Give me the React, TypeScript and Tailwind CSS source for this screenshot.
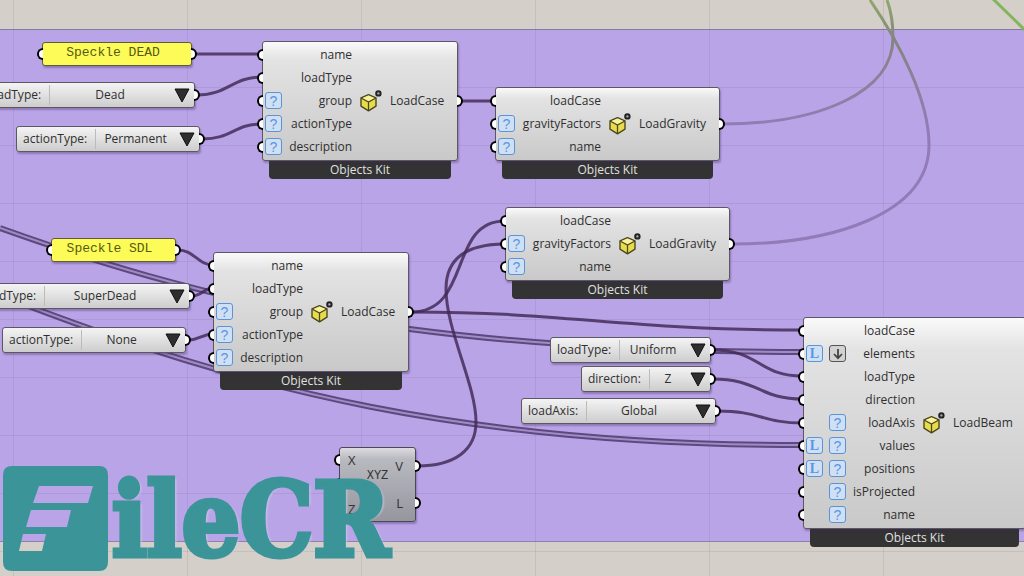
type Badge = 'optional' | 'list' | 'flatten'

type Param = {
  name: string
  badges?: (Badge | null)[]
}

const loadCaseInputs: Param[] = [
  { name: 'name' },
  { name: 'loadType' },
  { name: 'group', badges: ['optional'] },
  { name: 'actionType', badges: ['optional'] },
  { name: 'description', badges: ['optional'] },
]

const loadGravityInputs: Param[] = [
  { name: 'loadCase' },
  { name: 'gravityFactors', badges: ['optional'] },
  { name: 'name', badges: ['optional'] },
]

const loadBeamInputs: Param[] = [
  { name: 'loadCase' },
  { name: 'elements', badges: ['list', 'flatten'] },
  { name: 'loadType' },
  { name: 'direction' },
  { name: 'loadAxis', badges: [null, 'optional'] },
  { name: 'values', badges: ['list', 'optional'] },
  { name: 'positions', badges: ['list', 'optional'] },
  { name: 'isProjected', badges: [null, 'optional'] },
  { name: 'name', badges: [null, 'optional'] },
]

const wires = [
  'M194 54H262',
  'M197 95C228 95 232 77 262 77',
  'M202 139C232 139 234 124 262 124',
  'M460 101H496',
  'M178 250C194 250 198 265 213 265',
  'M192 296C202 296 204 288 213 288',
  'M188 340C200 340 202 334 213 334',
  'M411 312C472 312 448 221 505 221',
  'M417 466C455 466 476 450 476 422C476 385 446 330 446 289C446 260 465 244 505 244',
  'M411 312C570 312 620 330 803 330',
  'M712 350C760 350 758 376 803 376',
  'M712 379C760 379 758 399 803 399',
  'M718 411C760 411 762 423 803 423',
]

const listWires = [
  'M0 228C190 296 400 352 803 352',
  'M0 295C250 393 470 445 803 445',
]

function Port({ side }: { side: 'left' | 'right' }) {
  return side === 'left' ? (
    <span className="absolute top-1/2 -left-[6px] h-3 w-[6px] -translate-y-1/2 rounded-l-full border-2 border-r-0 border-black bg-white" />
  ) : (
    <span className="absolute top-1/2 -right-[6px] h-3 w-[6px] -translate-y-1/2 rounded-r-full border-2 border-l-0 border-black bg-white" />
  )
}

function BadgeIcon({ kind }: { kind: Badge | null }) {
  if (kind === null) return <span className="w-[17px]" />
  if (kind === 'flatten') {
    return (
      <span className="flex size-[17px] items-center justify-center rounded-[3px] border border-[#555] bg-[#d2d2d2]">
        <svg viewBox="0 0 12 12" className="size-3" fill="none" stroke="#444" strokeWidth="1.8">
          <path d="M6 1V10M2 6L6 10.2L10 6" />
        </svg>
      </span>
    )
  }
  return (
    <span className="flex size-[17px] items-center justify-center rounded-[3px] border border-[#5b93d8] bg-[#cfe0f5] text-[#5b96e4]">
      {kind === 'optional' ? (
        <span className="font-['Liberation_Sans',sans-serif] text-sm leading-none">?</span>
      ) : (
        <span className="font-['Liberation_Serif',serif] text-sm leading-none font-bold">L</span>
      )}
    </span>
  )
}

function CubeIcon() {
  return (
    <svg viewBox="0 0 22 22" className="size-[22px] shrink-0">
      <path d="M8.5 4.7L16 8V16.2L8.5 20.8L1 16.2V8Z" fill="#e9dc4c" stroke="#4b4720" strokeWidth="1.4" strokeLinejoin="round" />
      <path d="M8.5 5.4L15 8.2L8.5 11.8L2 8.2Z" fill="#f8f29b" />
      <path d="M1.5 8.2L8.5 12L15.5 8.2M8.5 12V20" fill="none" stroke="#4b4720" strokeWidth="1.3" />
      <circle cx="18.4" cy="3.4" r="2.2" fill="#aaa" stroke="#222" strokeWidth="2" />
    </svg>
  )
}

type ComponentNodeProps = {
  place: string
  inputsWidth: string
  inputs: Param[]
  output: string
}

function ComponentNode({ place, inputsWidth, inputs, output }: ComponentNodeProps) {
  return (
    <section className={`absolute ${place}`}>
      <div className="relative flex items-center gap-2 rounded-[3px] border border-[#5c5863] bg-linear-to-b from-[#fafafa] via-[#e3e3e3] via-15% to-[#c9c9c9] pt-px pb-[2px] shadow-[1px_2px_2px_rgba(60,40,90,0.35)]">
        <ul className={inputsWidth}>
          {inputs.map((input) => (
            <li key={input.name} className="relative flex h-[23px] items-center gap-[6px] pl-[2px]">
              <Port side="left" />
              {input.badges?.map((badge, i) => <BadgeIcon key={i} kind={badge} />)}
              <span className="ml-auto">{input.name}</span>
            </li>
          ))}
        </ul>
        <CubeIcon />
        <span>{output}</span>
        <Port side="right" />
      </div>
      <footer className="mx-[7px] h-[18px] rounded-b-[4px] bg-[#333] text-center leading-[18px] text-[#e0e0e0]">
        Objects Kit
      </footer>
    </section>
  )
}

type ValueListProps = {
  id: string
  place: string
  label: string
  value: string
}

function ValueList({ id, place, label, value }: ValueListProps) {
  return (
    <div
      className={`absolute flex h-[26px] items-center rounded-[3px] border border-[#5c5863] bg-linear-to-b from-[#f4f4f4] to-[#cdcdcd] shadow-[1px_2px_2px_rgba(60,40,90,0.35)] ${place}`}
    >
      <label htmlFor={id} className="pr-2 pl-[6px]">
        {label}:
      </label>
      <span className="h-5 w-px bg-[#bbb]" />
      <select
        id={id}
        defaultValue={value}
        className="h-full min-w-0 flex-1 appearance-none bg-transparent pr-1 text-center [text-align-last:center]"
      >
        <option>{value}</option>
      </select>
      <svg viewBox="0 0 16 15" className="pointer-events-none mr-1 h-[15px] w-4">
        <path d="M1 1H15L8 14Z" fill="#2e2e2e" stroke="#111" />
      </svg>
      <Port side="right" />
    </div>
  )
}

function Panel({ place, text }: { place: string; text: string }) {
  return (
    <div
      className={`absolute h-6 rounded-[3px] border border-[#5f5b3c] bg-[#fdfb58] shadow-[1px_2px_2px_rgba(60,40,90,0.35)] ${place}`}
    >
      <input
        aria-label="Panel text"
        defaultValue={text}
        className="block h-[18px] w-full pr-2 text-center font-['Liberation_Mono',monospace] text-[13px] text-[#555a12]"
      />
      <Port side="left" />
      <Port side="right" />
    </div>
  )
}

function VectorNode() {
  return (
    <section className="absolute top-[447px] left-[339px] flex h-[75px] w-[77px] rounded-[3px] border border-[#4a4852] bg-linear-to-b from-[#dcdce0] via-[#b9b9c0] via-15% to-[#96969f] text-[13px] text-[#333] shadow-[1px_2px_2px_rgba(60,40,90,0.35)]">
      <ul className="flex flex-1 flex-col justify-around">
        {['X', 'Y', 'Z'].map((axis) => (
          <li key={axis} className="relative pl-2 leading-5">
            <Port side="left" />
            {axis}
          </li>
        ))}
      </ul>
      <span className="pt-5 font-['Liberation_Mono',monospace] text-xs">XYZ</span>
      <ul className="flex flex-1 flex-col justify-around">
        {['V', 'L'].map((out) => (
          <li key={out} className="relative pr-3 text-right leading-5">
            {out}
            <Port side="right" />
          </li>
        ))}
      </ul>
    </section>
  )
}

function Wires() {
  return (
    <svg className="absolute top-0 left-0 h-full w-full" fill="none">
      <defs>
        <pattern id="grid" x="13" y="29" width="174" height="58" patternUnits="userSpaceOnUse">
          <path d="M0.5 0V58M0 0.5H174" stroke="#4a4070" strokeOpacity="0.1" />
        </pattern>
        <linearGradient id="fade" x1="0" y1="0" x2="0" y2="130" gradientUnits="userSpaceOnUse">
          <stop offset="0" stopColor="#8fa86a" />
          <stop offset="0.3" stopColor="#84857f" />
          <stop offset="1" stopColor="#937bb8" />
        </linearGradient>
      </defs>
      <rect width="100%" height="100%" fill="url(#grid)" />
      <g stroke="url(#fade)" strokeWidth="3">
        <path d="M722 124C820 124 893 92 893 38C893 22 890 8 887 0" />
        <path d="M733 244C830 244 929 215 929 145C929 100 900 44 870 0" />
      </g>
      <path d="M992 -2L1026 31" stroke="#84b45c" strokeWidth="3" />
      {listWires.map((d) => (
        <g key={d}>
          <path d={d} stroke="#5d4980" strokeWidth="6" />
          <path d={d} stroke="#a08bc4" strokeWidth="2" />
        </g>
      ))}
      <g stroke="#3f2854" strokeWidth="3" strokeOpacity="0.82">
        {wires.map((d) => (
          <path key={d} d={d} />
        ))}
      </g>
    </svg>
  )
}

function Watermark() {
  return (
    <div className="pointer-events-none absolute top-[466px] left-[3px] flex text-[#3a9498]">
      <svg viewBox="0 0 105 105" className="size-[105px] shrink-0">
        <path
          fill="currentColor"
          fillRule="evenodd"
          d="M9 0H96Q105 0 105 9V96Q105 105 96 105H9Q0 105 0 96V9Q0 0 9 0ZM36 20L30 37H85L90 20ZM28 44L23 61H64L68 44ZM20 68L16 85H39L43 68Z"
        />
      </svg>
      <span className="ml-1 font-['DejaVu_Serif_Condensed','DejaVu_Serif',serif] text-[102px] leading-[108px] font-bold [-webkit-text-stroke:5px_#3a9498] [text-shadow:4px_1px_2px_rgba(205,205,235,0.6)]">
        ileCR
      </span>
    </div>
  )
}

export default function App() {
  return (
    <main className="relative flex min-h-screen w-full flex-col overflow-hidden bg-[#d4cfc8] font-['Open_Sans','Noto_Sans',sans-serif] text-xs text-[#2f2f2f]">
      <div className="mt-[29px] h-[513px] border-y border-[#8f80ae] bg-[#baa4e8]" />
      <Wires />

      <Panel place="top-[42px] left-[42px] w-[150px]" text="Speckle DEAD" />
      <ValueList id="case-dead" place="top-[82px] -left-5 w-[215px]" label="loadType" value="Dead" />
      <ValueList id="action-dead" place="top-[126px] left-4 w-[184px]" label="actionType" value="Permanent" />

      <Panel place="top-[238px] left-[51px] w-[125px]" text="Speckle SDL" />
      <ValueList id="case-sdl" place="top-[283px] -left-[25px] w-[215px]" label="loadType" value="SuperDead" />
      <ValueList id="action-sdl" place="top-[327px] left-[2px] w-[184px]" label="actionType" value="None" />

      <ComponentNode place="top-[41px] left-[262px] w-[196px]" inputsWidth="w-[89px]" inputs={loadCaseInputs} output="LoadCase" />
      <ComponentNode place="top-[252px] left-[213px] w-[196px]" inputsWidth="w-[89px]" inputs={loadCaseInputs} output="LoadCase" />
      <ComponentNode place="top-[87px] left-[495px] w-[225px]" inputsWidth="w-[105px]" inputs={loadGravityInputs} output="LoadGravity" />
      <ComponentNode place="top-[207px] left-[505px] w-[225px]" inputsWidth="w-[105px]" inputs={loadGravityInputs} output="LoadGravity" />

      <ValueList id="beam-type" place="top-[337px] left-[550px] w-[161px]" label="loadType" value="Uniform" />
      <ValueList id="beam-direction" place="top-[366px] left-[581px] w-[130px]" label="direction" value="Z" />
      <ValueList id="beam-axis" place="top-[398px] left-[521px] w-[195px]" label="loadAxis" value="Global" />

      <ComponentNode place="top-[317px] left-[803px] w-[223px]" inputsWidth="w-[111px]" inputs={loadBeamInputs} output="LoadBeam" />

      <VectorNode />
      <Watermark />
    </main>
  )
}
